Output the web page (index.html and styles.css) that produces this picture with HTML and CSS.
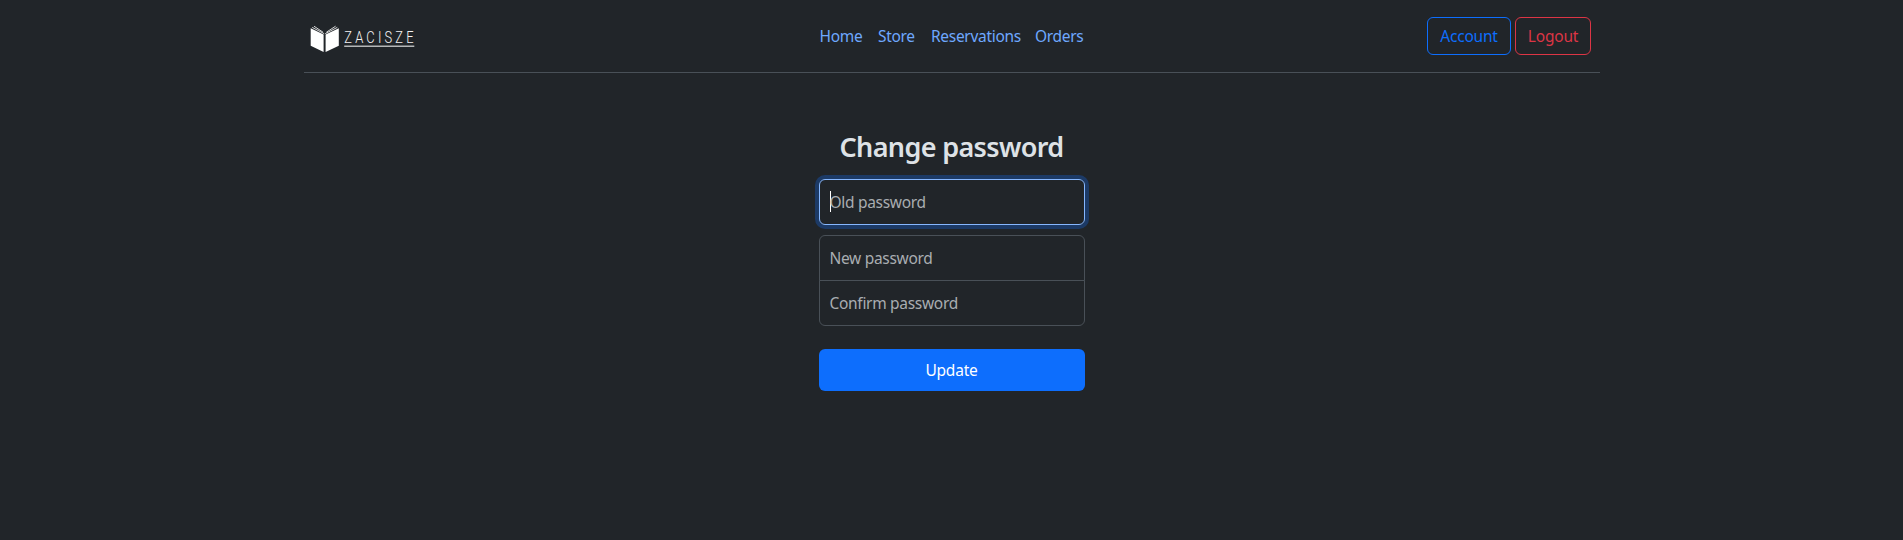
FILE: index.html
```html
<!DOCTYPE html>
<html lang="en">
<head>
<meta charset="utf-8">
<title>Change password</title>
<link rel="stylesheet" href="styles.css">
</head>
<body>
<div class="container">
  <header class="header">
    <a class="logo" href="#" aria-label="Zacisze">
      <svg width="120" height="32" viewBox="0 0 120 32">
        <path class="page" d="M2.7 7.2 15.6 13.6V31L2.7 24.8ZM17.6 13.6 30.8 7.2V24.8L17.6 31Z"/>
        <path class="leaf" d="M4.2 6.4 16.2 12.7M6 5.2 15 11.2M29.3 6.4 17.2 12.7M27.6 5.2 18.4 11.2"/>
        <text class="wordmark" transform="translate(36.2 22) scale(.78 1)" x="0" y="0">ZACISZE</text>
        <path class="rule" d="M36.2 25.2H106.3"/>
      </svg>
    </a>
    <nav class="nav">
      <a class="link home" href="#">Home</a>
      <a class="link store" href="#">Store</a>
      <a class="link reservations" href="#">Reservations</a>
      <a class="link orders" href="#">Orders</a>
    </nav>
    <div class="actions">
      <button class="btn account" type="button">Account</button>
      <button class="btn logout" type="button">Logout</button>
    </div>
  </header>
  <main class="form">
    <h1 class="title">Change password</h1>
    <div class="field focused"><span class="caret"></span>Old password</div>
    <div class="field first">New password</div>
    <div class="field last">Confirm password</div>
    <button class="submit" type="button">Update</button>
  </main>
</div>
</body>
</html>
```
FILE: styles.css
```css
* { box-sizing: border-box; }
body {
  margin: 0;
  min-height: 540px;
  background: #212529;
  color: #dee2e6;
  font: 15.5px/24px "Segoe UI", "Noto Sans", sans-serif;
  letter-spacing: -0.3px;
}
.container { width: 1296px; margin: 0 auto; }
.header {
  display: grid;
  grid-template-columns: 1fr auto 1fr;
  align-items: center;
  height: 73px;
  border-bottom: 1px solid #495057;
}
.logo { display: block; height: 32px; margin: 1px 0 0 4.5px; }
.logo svg { display: block; }
.page { fill: #fff; }
.leaf { fill: none; stroke: #fff; stroke-width: 0.8; }
.wordmark { fill: #f4f4f4; font: 300 16.5px Roboto, sans-serif; letter-spacing: 4.1px; }
.rule { stroke: #b5b7b8; stroke-width: 1.4; }
.nav { display: flex; }
.link { padding: 0 8px; color: #6ea8fe; text-decoration: none; white-space: nowrap; }
.link.home { padding-left: 8.5px; }
.link.store { padding-left: 8.5px; }
.home { width: 58.5px; }
.store { width: 53.5px; }
.reservations { width: 104px; }
.orders { width: 65px; }
.actions { display: flex; justify-content: flex-end; gap: 4px; padding-right: 9px; }
.btn {
  height: 38px;
  padding: 0 0 0 1px;
  border: 1px solid;
  border-radius: 6px;
  background: transparent;
  font: inherit;
  letter-spacing: -0.2px;
}
.account { width: 84px; color: #0d6efd; }
.logout { width: 76px; color: #dc3545; }
.form { width: 266px; margin: 0 auto; padding-top: 57px; }
.title {
  margin: 0 0 15px;
  font-size: 27px;
  font-weight: 600;
  line-height: 34px;
  letter-spacing: -0.65px;
  text-align: center;
  white-space: nowrap;
}
.field {
  display: flex;
  align-items: center;
  height: 46px;
  padding: 0 10px;
  border: 1px solid #495057;
  color: #a9adb1;
}
.focused {
  margin-bottom: 10px;
  border-color: #86b7fe;
  border-radius: 6px;
  box-shadow: 0 0 0 4px #1c3a66;
}
.caret { width: 1px; height: 21px; margin: -2px -1px 0 0; background: #fff; }
.first { border-radius: 6px 6px 0 0; }
.last { margin-top: -1px; border-radius: 0 0 6px 6px; }
.submit {
  display: block;
  width: 100%;
  height: 42px;
  margin-top: 23px;
  padding: 0;
  border: 0;
  border-radius: 6px;
  background: #0d6efd;
  color: #fff;
  font: inherit;
  letter-spacing: -0.2px;
}
```
